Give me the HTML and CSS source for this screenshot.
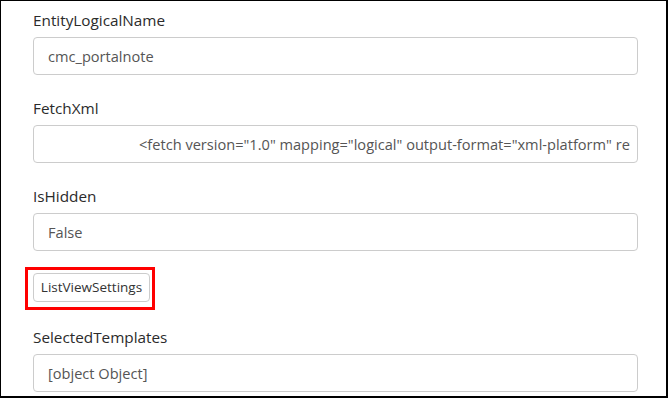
FILE: index.html
```html
<!DOCTYPE html>
<html>
<head>
<meta charset="utf-8">
<link rel="stylesheet" href="styles.css">
</head>
<body>
<div class="frame">
  <div class="group">
    <label class="label">EntityLogicalName</label>
    <div class="field"><span class="field-text">cmc_portalnote</span></div>
  </div>
  <div class="group">
    <label class="label">FetchXml</label>
    <div class="field field-indented"><span class="field-text">&lt;fetch version="1.0" mapping="logical" output-format="xml-platform" returntotalrecordcount="true"&gt;</span></div>
  </div>
  <div class="group">
    <label class="label">IsHidden</label>
    <div class="field"><span class="field-text">False</span></div>
  </div>
  <div class="button-row">
    <span class="highlight"><button class="btn" type="button">ListViewSettings</button></span>
  </div>
  <div class="group">
    <label class="label">SelectedTemplates</label>
    <div class="field"><span class="field-text">[object Object]</span></div>
  </div>
</div>
</body>
</html>
```

FILE: styles.css
```css
html, body {
  margin: 0;
  padding: 0;
  background: #fff;
}
body {
  font-family: "Open Sans", "Noto Sans", sans-serif;
}
.frame {
  box-sizing: border-box;
  width: 668px;
  height: 398px;
  overflow: hidden;
  border-style: solid;
  border-color: #000;
  border-width: 1px 2px 2px 1px;
  padding: 9px 28px 0 32px;
}
.group {
  margin-bottom: 23px;
}
.label {
  display: block;
  font-size: 15.3px;
  line-height: 20px;
  font-weight: 400;
  color: #2b2b2b;
  margin-bottom: 7px;
}
.field {
  box-sizing: border-box;
  height: 38px;
  border: 1px solid #ccc;
  border-radius: 4px;
  padding: 0 7px 0 14px;
  background: #fff;
}
.field-text {
  display: block;
  overflow: hidden;
  white-space: nowrap;
  font-size: 14.6px;
  line-height: 36px;
  color: #555;
}
.field-indented {
  padding-left: 105px;
}
.button-row {
  margin-top: -1px;
  margin-bottom: 25px;
}
.highlight {
  position: relative;
  display: inline-block;
}
.highlight::after {
  content: "";
  position: absolute;
  left: -8px;
  top: -6px;
  right: -5px;
  bottom: -8px;
  border: 3px solid #f00;
  pointer-events: none;
}
.btn {
  display: block;
  box-sizing: border-box;
  height: 29px;
  width: 117px;
  margin: 0;
  padding: 0 6px;
  background: #fff;
  border: 1px solid #ccc;
  border-radius: 4px;
  font-family: "Open Sans", "Noto Sans", sans-serif;
  font-size: 13.5px;
  color: #333;
  line-height: 27px;
}
```
